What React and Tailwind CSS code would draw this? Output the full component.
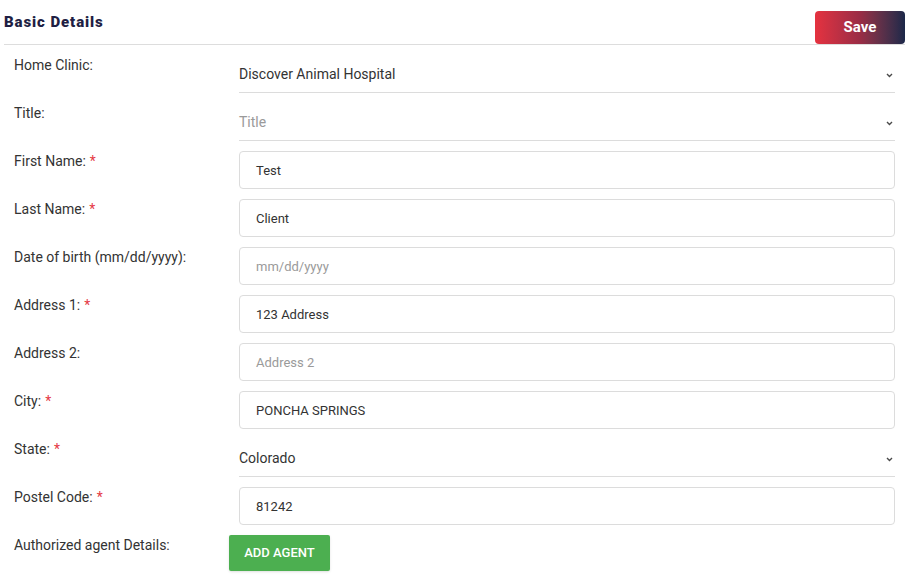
import React from "react";

const font = { fontFamily: "Roboto, 'Liberation Sans', sans-serif" };

function Chevron() {
  return (
    <svg width="7" height="5" viewBox="0 0 7 5" className="shrink-0 mr-[2px] mt-[1px]">
      <path d="M1 1 L3.5 3.5 L6 1" fill="none" stroke="#4a4a4a" strokeWidth="1.4" />
    </svg>
  );
}

function Label({ text, req }) {
  return (
    <div className="w-[225px] shrink-0 text-[14px] leading-[20px] text-[#333]">
      {text}
      {req && <span className="text-[#e53945] ml-[4px]">*</span>}
    </div>
  );
}

function SelectRow({ label, value, placeholder, req }) {
  return (
    <div className="flex items-start">
      <Label text={label} req={req} />
      <div className="flex-1 h-[38px] border-b border-[#dcdcdc] flex items-center justify-between pt-[2px]">
        <span className={"text-[14px] " + (placeholder ? "text-[#9a9a9a]" : "text-[#333]")}>
          {value}
        </span>
        <Chevron />
      </div>
    </div>
  );
}

function InputRow({ label, value, placeholder, req }) {
  return (
    <div className="flex items-start">
      <Label text={label} req={req} />
      <div className="flex-1 h-[38px] border border-[#dcdcdc] rounded-[4px] flex items-center pl-[16px] pt-[2px]">
        <span className={"text-[13px] " + (placeholder ? "text-[#9a9a9a]" : "text-[#333]")}>
          {value}
        </span>
      </div>
    </div>
  );
}

export default function App() {
  return (
    <div className="w-[918px] h-[582px] bg-white overflow-hidden" style={font}>
      <div className="ml-[4px] w-[901px]">
        <div className="h-[45px] flex items-start justify-between border-b border-[#dddddd]">
          <div className="pt-[12px] text-[15px] font-black tracking-[0.9px] text-[#1f1f44] leading-[20px]">
            Basic Details
          </div>
          <button
            className="mt-[11px] w-[90px] h-[33px] rounded-[4px] text-white font-bold text-[15px] bg-gradient-to-r from-[#e5323f] via-[#9a2c45] to-[#1b2749]"
          >
            Save
          </button>
        </div>
        <div className="pl-[10px] pr-[10px] pt-[10px] flex flex-col gap-[10px]">
          <SelectRow label="Home Clinic:" value="Discover Animal Hospital" />
          <SelectRow label="Title:" value="Title" placeholder />
          <InputRow label="First Name:" value="Test" req />
          <InputRow label="Last Name:" value="Client" req />
          <InputRow label="Date of birth (mm/dd/yyyy):" value="mm/dd/yyyy" placeholder />
          <InputRow label="Address 1:" value="123 Address" req />
          <InputRow label="Address 2:" value="Address 2" placeholder />
          <InputRow label="City:" value="PONCHA SPRINGS" req />
          <SelectRow label="State:" value="Colorado" req />
          <InputRow label="Postel Code:" value="81242" req />
          <div className="flex items-start">
            <div className="w-[215px] shrink-0 text-[14px] leading-[20px] text-[#333]">
              Authorized agent Details:
            </div>
            <button className="w-[101px] h-[36px] rounded-[2px] bg-[#4caf50] text-white text-[13px] font-medium shadow-sm">
              ADD AGENT
            </button>
          </div>
        </div>
      </div>
    </div>
  );
}
